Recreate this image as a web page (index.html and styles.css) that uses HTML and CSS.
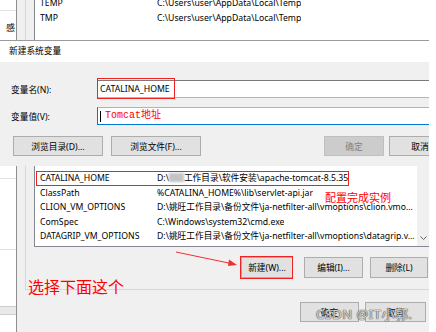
FILE: index.html
```html
<!doctype html>
<html>
<head>
    <meta charset="utf-8">
    <title>新建系统变量</title>
    <meta name="viewport" content="width=device-width, initial-scale=1">
    <link rel="stylesheet" href="styles.css">
</head>
<body>
<div class="screen">

    <div class="back back-top">
        <div class="strip strip-top">
            <div class="strip-line"></div>
            <span class="cut">感</span>
        </div>
        <div class="win">
            <div class="grp">
                <div class="list list-top">
                    <div class="row"><span class="name">TEMP</span><span class="val">C:\Users\user\AppData\Local\Temp</span></div>
                    <div class="row"><span class="name">TMP</span><span class="val">C:\Users\user\AppData\Local\Temp</span></div>
                </div>
            </div>
        </div>
    </div>

    <div class="dialog">
        <div class="title">新建系统变量</div>
        <div class="body">
            <div class="field">
                <label>变量名(N):</label>
                <div class="input">CATALINA_HOME</div>
            </div>
            <div class="field">
                <label>变量值(V):</label>
                <div class="input focus"><span class="caret"></span><span class="hint">Tomcat地址</span></div>
            </div>
            <div class="actions">
                <button class="btn wide">浏览目录(D)...</button>
                <button class="btn wide">浏览文件(F)...</button>
                <span class="spacer"></span>
                <button class="btn" disabled>确定</button>
                <button class="btn cut-right">取消</button>
            </div>
        </div>
    </div>

    <div class="back back-bottom">
        <div class="strip strip-bottom">
            <div class="s1"></div>
            <div class="s2"></div>
            <div class="s3"></div>
            <div class="s4"></div>
        </div>
        <div class="win">
            <div class="grp grp-closed">
                <div class="list list-sys">
                    <div class="rows">
                        <div class="row"><span class="name">CATALINA_HOME</span><span class="val">D:\<span class="blur"></span>工作目录\软件安装\apache-tomcat-8.5.35</span></div>
                        <div class="row"><span class="name">ClassPath</span><span class="val">%CATALINA_HOME%\lib\servlet-api.jar</span></div>
                        <div class="row"><span class="name">CLION_VM_OPTIONS</span><span class="val">D:\姚旺工作目录\备份文件\ja-netfilter-all\vmoptions\clion.vmo...</span></div>
                        <div class="row"><span class="name">ComSpec</span><span class="val">C:\Windows\system32\cmd.exe</span></div>
                        <div class="row"><span class="name">DATAGRIP_VM_OPTIONS</span><span class="val">D:\姚旺工作目录\备份文件\ja-netfilter-all\vmoptions\datagrip.v...</span></div>
                    </div>
                    <div class="scroll">
                        <svg width="7" height="5" viewBox="0 0 7 5"><path d="M0.5 0.5 L3.5 3.5 L6.5 0.5" fill="none" stroke="#606060" stroke-width="1"/></svg>
                    </div>
                </div>
                <div class="list-btns">
                    <button class="btn new">新建(W)...</button>
                    <button class="btn edit">编辑(I)...</button>
                    <button class="btn del">删除(L)</button>
                </div>
            </div>
            <div class="win-btns">
                <button class="btn ok">确定</button>
                <button class="btn cancel">取消</button>
            </div>
        </div>
    </div>

    <!-- annotations drawn over the screenshot -->
    <div class="mark mark-name"></div>
    <div class="mark mark-row"></div>
    <div class="mark mark-new"></div>
    <div class="note note-done">配置完成实例</div>
    <div class="note note-pick">选择下面这个</div>
    <svg class="arrow" width="436" height="332" viewBox="0 0 436 332">
        <line x1="176" y1="252" x2="231" y2="263.5" stroke="#f03030" stroke-width="1"/>
        <path d="M237 265 L229 259.5 L228 266 Z" fill="#f03030"/>
    </svg>
    <div class="watermark">CSDN @IT小郭.</div>
</div>
</body>
</html>
```

FILE: styles.css
```css
html {
    background: #fff;
}

body {
    margin: 0;
    font-family: "Noto Sans", "Noto Sans CJK SC", sans-serif;
    font-size: 8.7px;
    color: #000;
}

.screen {
    position: relative;
    width: 429px;
    height: 332px;
    overflow: hidden;
}

button {
    font: inherit;
}

.btn {
    height: 20px;
    padding: 0;
    background: #e1e1e1;
    border: 1px solid #adadad;
    color: #000;
    white-space: nowrap;
}

.btn:disabled {
    background: #cccccc;
    border-color: #bfbfbf;
    color: #838383;
}

/* windows behind the dialog */
.back {
    display: flex;
}

.back-top {
    height: 40px;
}

.back-bottom {
    height: 166px;
}

.strip {
    width: 16px;
    flex-shrink: 0;
    background: #fff;
    overflow: hidden;
}

.strip-line {
    height: 10px;
    border-bottom: 1px solid #e3e3e3;
}

.strip-top .cut {
    display: block;
    margin: 12px 0 0 6px;
    font-size: 9px;
    line-height: 10px;
    white-space: nowrap;
}

.strip-bottom .s1 {
    height: 12px;
    border-bottom: 1px solid #e3e3e3;
}

.strip-bottom .s2 {
    height: 70px;
    border-bottom: 1px solid #e3e3e3;
}

.strip-bottom .s3 {
    height: 56px;
    border-bottom: 1px solid #cdcdcd;
}

.strip-bottom .s4 {
    height: 7px;
    background: #e9e9e9;
    border-bottom: 1px solid #cdcdcd;
}

.win {
    flex: 1;
    display: flex;
    flex-direction: column;
    background: #f0f0f0;
    border-left: 1px solid #8e8e8e;
    padding-left: 8px;
}

.grp {
    flex: 1;
    border-left: 1px solid #d6d6d6;
    padding-left: 8px;
}

.grp-closed {
    flex: none;
    border-bottom: 1px solid #d6d6d6;
    padding-bottom: 11px;
}

.list {
    background: #fff;
    border-left: 1px solid #828790;
    overflow: hidden;
}

.list-top {
    height: 40px;
}

.list-top .row:first-child {
    margin-top: -4px;
}

.row {
    display: flex;
    height: 14.5px;
    line-height: 14.5px;
    padding-left: 5px;
    white-space: nowrap;
}

.row .name {
    width: 117px;
    flex-shrink: 0;
}

.row .val {
    overflow: hidden;
}

.blur {
    display: inline-block;
    width: 15px;
    height: 9px;
    vertical-align: -1px;
    background: #c4c4c4;
    filter: blur(1px);
}

.list-sys {
    display: flex;
    height: 80px;
    border-bottom: 1px solid #828790;
}

.rows {
    flex: 1;
    min-width: 0;
    padding-top: 5px;
    overflow: hidden;
}

.scroll {
    width: 12px;
    flex-shrink: 0;
    background: #f0f0f0;
    display: flex;
    align-items: flex-end;
    justify-content: center;
    padding-bottom: 5px;
}

.list-btns {
    display: flex;
    justify-content: flex-end;
    margin-top: 10px;
    padding-right: 1px;
}

.list-btns .btn {
    height: 21px;
}

.new {
    width: 52px;
    margin-right: 11px;
}

.edit {
    width: 59px;
    margin-right: 7px;
}

.del {
    width: 58px;
}

.win-btns {
    display: flex;
    justify-content: flex-end;
    margin-top: 12px;
    padding-right: 3px;
}

.ok {
    width: 59px;
    margin-right: 6px;
}

.cancel {
    width: 61px;
}

/* the dialog in front */
.dialog {
    border-top: 1px solid #9a9a9a;
}

.title {
    height: 21px;
    line-height: 21px;
    padding-left: 9px;
    background: #fff;
}

.body {
    height: 76px;
    padding: 18px 0 10px 11px;
    background: #f0f0f0;
}

.field {
    display: flex;
    align-items: center;
    margin-bottom: 9px;
}

.field:nth-child(2) {
    margin-bottom: 11px;
}

.field label {
    width: 86px;
    flex-shrink: 0;
}

.input {
    flex: 1;
    height: 16px;
    line-height: 16px;
    margin-right: -10px;
    padding-left: 2px;
    background: #fff;
    border: 1px solid #b4b4b4;
    border-top-color: #7a7a7a;
    display: flex;
    align-items: center;
}

.input.focus {
    border-color: #0078d7;
    border-top-color: #8cbdea;
}

.caret {
    width: 1px;
    height: 11px;
    background: #000;
    margin-right: 4px;
}

.hint {
    font-family: "Liberation Mono", "Noto Sans CJK SC", monospace;
    font-size: 10px;
    color: #f00;
}

.actions {
    display: flex;
    padding-left: 2px;
}

.wide {
    width: 90px;
    margin-right: 8px;
}

.spacer {
    flex: 1;
}

.actions .btn:disabled {
    width: 60px;
    margin-right: 5px;
}

.cut-right {
    width: 62px;
    margin-right: -22px;
}

/* annotations */
.mark {
    position: absolute;
    border: 1px solid #ee2222;
}

.mark-name {
    left: 97px;
    top: 78px;
    width: 76px;
    height: 19px;
}

.mark-row {
    left: 36px;
    top: 171px;
    width: 311px;
    height: 13px;
}

.mark-new {
    left: 240px;
    top: 256px;
    width: 51px;
    height: 21px;
}

.note {
    position: absolute;
    color: #f00;
    font-family: "Noto Sans CJK SC", sans-serif;
    white-space: nowrap;
}

.note-done {
    left: 325px;
    top: 191px;
    font-size: 11px;
    line-height: 13px;
}

.note-pick {
    left: 28px;
    top: 277px;
    font-size: 16px;
    line-height: 18px;
}

.arrow {
    position: absolute;
    left: 0;
    top: 0;
}

.watermark {
    position: absolute;
    left: 316px;
    top: 306px;
    font-size: 13px;
    line-height: 16px;
    letter-spacing: 0.5px;
    color: rgba(225, 225, 225, 0.9);
    text-shadow: 0 0 1px #5a5a5a, 0 0 1px #5a5a5a, 0 0 1px #5a5a5a;
    white-space: nowrap;
}
```
